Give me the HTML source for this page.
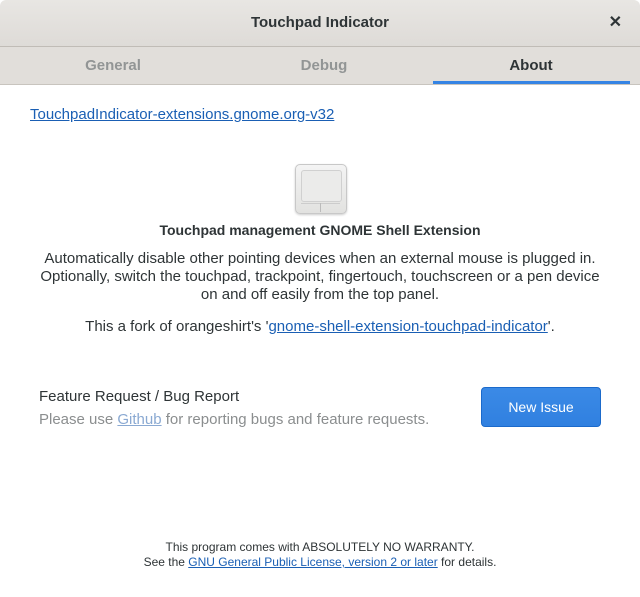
<!DOCTYPE html>
<html><head><style>
body{margin:0;width:640px;height:597px;background:#fff;font-family:"Liberation Sans",sans-serif;overflow:hidden;position:relative;color:#2e3436}
.hdr{position:absolute;top:0;left:0;width:640px;height:46px;background:linear-gradient(#e8e6e3,#dedbd7);border-bottom:1px solid #c0bcb6;border-radius:6px 6px 0 0}
.hdr .t{position:absolute;top:14px;width:100%;text-align:center;font-weight:bold;font-size:15px;color:#2e3436}
.hdr .x{position:absolute;right:18px;top:12px;font-size:16px;font-weight:bold}
.tabs{position:absolute;top:47px;left:0;width:640px;height:37px;background:#e1deda;border-bottom:1px solid #c8c4be}
.tab{position:absolute;top:10px;font-weight:bold;font-size:15px;color:#929595;text-align:center;width:200px}
.ul{position:absolute;left:433px;top:34px;width:197px;height:3px;background:#3584e4}
a{color:#1a5fb4;text-decoration:underline}
.c{position:absolute;width:640px;text-align:center;font-size:15px}
</style></head><body>
<div class="hdr"><div class="t">Touchpad Indicator</div><div class="x">✕</div></div>
<div class="tabs">
<div class="tab" style="left:13px">General</div>
<div class="tab" style="left:224px">Debug</div>
<div class="tab" style="left:431px;color:#2e3436">About</div>
<div class="ul"></div>
</div>
<div style="position:absolute;left:30px;top:106px;font-size:15px"><a>TouchpadIndicator-extensions.gnome.org-v32</a></div>
<div style="position:absolute;left:295px;top:164px;width:50px;height:48px;border:1px solid #c8c8c8;border-radius:5px;background:linear-gradient(#f4f4f4,#e2e2e0);box-shadow:0 1px 2px rgba(0,0,0,.2)">
<div style="position:absolute;left:5px;top:5px;width:39px;height:30px;border:1px solid #d0d0d0;border-radius:3px;background:#ebebea"></div>
<div style="position:absolute;left:5px;top:38px;width:39px;height:7px;border-top:1px solid #ccc"></div>
<div style="position:absolute;left:24px;top:38px;width:1px;height:9px;background:#bbb"></div>
</div>
<div class="c" style="top:222px;font-weight:bold;font-size:14px">Touchpad management GNOME Shell Extension</div>
<div class="c" style="top:250px;line-height:18px">Automatically disable other pointing devices when an external mouse is plugged in.<br>Optionally, switch the touchpad, trackpoint, fingertouch, touchscreen or a pen device<br>on and off easily from the top panel.</div>
<div class="c" style="top:318px">This a fork of orangeshirt's '<a>gnome-shell-extension-touchpad-indicator</a>'.</div>
<div style="position:absolute;left:39px;top:388px;font-size:15px">Feature Request / Bug Report</div>
<div style="position:absolute;left:39px;top:411px;font-size:15px;color:#8b8e8f">Please use <a style="color:#8aa9d2">Github</a> for reporting bugs and feature requests.</div>
<div style="position:absolute;left:481px;top:387px;width:118px;height:38px;border:1px solid #1b6acb;border-radius:4px;background:linear-gradient(#3b8ae6,#3080e0);color:#fff;font-size:14px;text-align:center;line-height:38px">New Issue</div>
<div class="c" style="top:540px;font-size:12px;line-height:15px">This program comes with ABSOLUTELY NO WARRANTY.<br>See the <a>GNU General Public License, version 2 or later</a> for details.</div>
</body></html>
